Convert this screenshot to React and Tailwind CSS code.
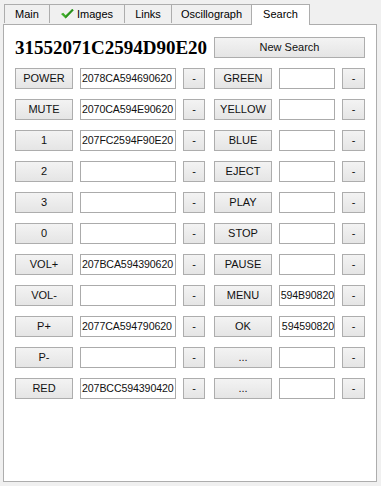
import React from 'react';

const leftRows = [
  ['POWER', '2078CA594690620'],
  ['MUTE', '2070CA594E90620'],
  ['1', '207FC2594F90E20'],
  ['2', ''],
  ['3', ''],
  ['0', ''],
  ['VOL+', '207BCA594390620'],
  ['VOL-', ''],
  ['P+', '2077CA594790620'],
  ['P-', ''],
  ['RED', '207BCC594390420'],
];

const rightRows = [
  ['GREEN', ''],
  ['YELLOW', ''],
  ['BLUE', ''],
  ['EJECT', ''],
  ['PLAY', ''],
  ['STOP', ''],
  ['PAUSE', ''],
  ['MENU', '594B90820'],
  ['OK', '594590820'],
  ['...', ''],
  ['...', ''],
];

const Btn = ({ children, className = '' }) => (
  <div
    className={`h-[21px] flex items-center justify-center border border-[#adadad] bg-linear-to-b from-[#f3f3f3] to-[#e5e5e5] text-[11px] text-[#111] ${className}`}
  >
    {children}
  </div>
);

const Field = ({ value, right, className = '' }) => (
  <div
    className={`h-[21px] flex items-center overflow-hidden whitespace-nowrap border border-[#ababab] bg-white text-[10.6px] tracking-[-0.1px] text-[#111] ${right ? 'justify-end' : 'pl-[1px]'} ${className}`}
  >
    <span className="shrink-0">{value}</span>
  </div>
);

const Check = () => (
  <svg width="13" height="10" viewBox="0 0 13 10" className="mr-[3px]">
    <polygon points="0,5 2.2,3.8 4.6,6.2 11.2,0 12.6,1.2 4.6,9.6" fill="#3fae2a" />
    <polygon points="4.6,9.6 12.6,1.2 11.2,0 4.6,7.4" fill="#2c8f1f" />
  </svg>
);

const tabs = [
  { label: 'Main', w: 'w-[46px]' },
  { label: 'Images', w: 'w-[76px]', icon: true },
  { label: 'Links', w: 'w-[48px]' },
  { label: 'Oscillograph', w: 'w-[81px]' },
];

const App = () => {
  return (
    <div className="w-[381px] h-[486px] bg-[#f0f0f0] font-['Liberation_Sans',sans-serif] text-[11px] text-black overflow-hidden">
      <div className="flex items-end h-[24px] pl-[4px] pt-[4px]">
        {tabs.map((t, i) => (
          <div
            key={t.label}
            className={`${t.w} h-[19px] ${i > 0 ? '-ml-px' : ''} flex items-center justify-center border border-b-0 border-[#adadad] bg-[#f0f0f0] mb-px`}
          >
            {t.icon && <Check />}
            {t.label}
          </div>
        ))}
        <div className="w-[59px] h-[21px] -ml-px flex items-center justify-center pb-[2px] border border-b-0 border-[#adadad] bg-white relative z-10 -mb-px">
          Search
        </div>
      </div>
      <div className="ml-[3px] w-[374px] h-[458px] border border-[#adadad] bg-white pt-[12px] pl-[11px]">
        <div className="flex items-center h-[21px]">
          <div className="w-[199px] font-['Liberation_Serif',serif] font-bold text-[19px] leading-none">
            31552071C2594D90E20
          </div>
          <Btn className="w-[151px]">New Search</Btn>
        </div>
        <div className="mt-[10px] flex flex-col gap-[10px]">
          {leftRows.map((row, i) => (
            <div key={i} className="flex items-center">
              <Btn className="w-[58px]">{row[0]}</Btn>
              <Field className="w-[96px] ml-[7px]" value={row[1]} />
              <Btn className="w-[22px] ml-[7px]">-</Btn>
              <Btn className="w-[58px] ml-[9px]">{rightRows[i][0]}</Btn>
              <Field className="w-[56px] ml-[7px]" value={rightRows[i][1]} right />
              <Btn className="w-[23px] ml-[7px]">-</Btn>
            </div>
          ))}
        </div>
      </div>
    </div>
  );
};

export default App;
